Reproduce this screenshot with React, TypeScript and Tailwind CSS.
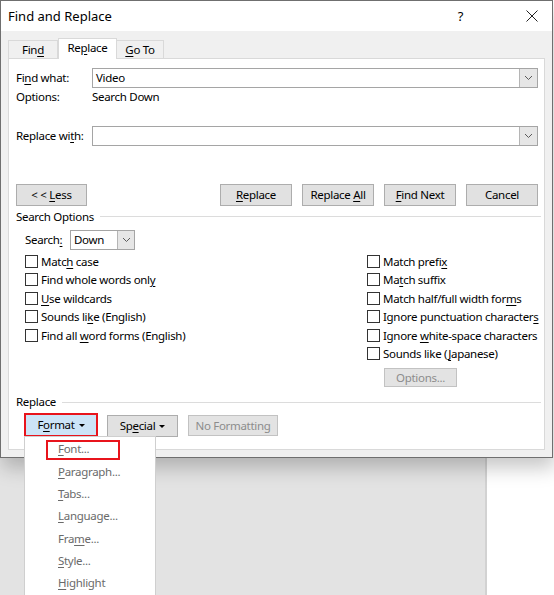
import React from 'react';

const U = ({ children }: { children: React.ReactNode }) => <span className="underline underline-offset-[2px]">{children}</span>;

const Chevron = () => (
  <svg width="9" height="6" viewBox="0 0 9 6" fill="none">
    <path d="M1 1l3.5 3.5L8 1" stroke="#5a5a5a" strokeWidth="1" />
  </svg>
);

const Caret = () => (
  <svg width="6" height="3" viewBox="0 0 6 3" className="ml-[4px]">
    <path d="M0 0h6L3 3z" fill="#000" />
  </svg>
);

const Btn = ({ children, className = '' }: { children: React.ReactNode; className?: string }) => (
  <div className={`h-[22px] flex items-center justify-center bg-[#e1e1e1] border border-[#adadad] whitespace-pre ${className}`}>
    <span className="flex items-center whitespace-pre">{children}</span>
  </div>
);

const Check = ({ children }: { children: React.ReactNode }) => (
  <div className="h-[18.5px] flex items-center whitespace-nowrap">
    <div className="shrink-0 w-[13px] h-[13px] border border-[#333333] bg-white" />
    <span className="ml-[3px]">{children}</span>
  </div>
);

export default function App() {
  return (
    <div className="relative w-[554px] h-[595px] overflow-hidden bg-white text-[11.5px] tracking-[-0.3px] text-black font-['Noto_Sans','Liberation_Sans',sans-serif] leading-none">
      {/* dialog window */}
      <div className="relative z-10 w-[553px] h-[458px] border border-[#6f6f6f] bg-[#f0f0f0] flex flex-col shadow-[2px_10px_18px_rgba(0,0,0,0.22)]">
        {/* title bar */}
        <div className="h-[30px] bg-white flex items-center pl-[7px] pr-[14px]">
          <span className="text-[13px] tracking-normal">Find and Replace</span>
          <span className="ml-auto text-[13px] mr-[63px]">?</span>
          <svg width="12" height="12" viewBox="0 0 12 12">
            <path d="M0.5 0.5l11 11M11.5 0.5l-11 11" stroke="#222" strokeWidth="1" />
          </svg>
        </div>

        {/* tabs */}
        <div className="h-[27px] flex items-end pl-[7px]">
          <div className="w-[50px] h-[18px] border border-b-0 border-[#d9d9d9] flex items-center justify-center">
            <span>Fin<U>d</U></span>
          </div>
          <div className="relative z-10 -mb-px w-[59px] h-[21px] bg-white border border-b-0 border-[#d9d9d9] flex items-center justify-center pb-[2px]">
            <span>Re<U>p</U>lace</span>
          </div>
          <div className="w-[47px] h-[18px] border border-b-0 border-l-0 border-[#d9d9d9] flex items-center justify-center">
            <span><U>G</U>o To</span>
          </div>
        </div>

        {/* panel */}
        <div className="relative ml-[7px] w-[537px] h-[392px] bg-white border border-[#d9d9d9] flex flex-col">
          <div className="mt-[9px] h-[20px] flex items-center pl-[7px]">
            <span className="w-[76px]">Fi<U>n</U>d what:</span>
            <div className="w-[446px] h-[20px] border border-[#a5a5a5] flex items-center">
              <span className="pl-[3px] flex-1">Video</span>
              <div className="w-[18px] h-[18px] bg-[#e6e6e6] border-l border-[#b5b5b5] flex items-center justify-center">
                <Chevron />
              </div>
            </div>
          </div>
          <div className="h-[18px] flex items-center pl-[7px]">
            <span className="w-[76px]">Options:</span>
            <span>Search Down</span>
          </div>

          <div className="mt-[20px] h-[20px] flex items-center pl-[7px]">
            <span className="w-[76px]">Replace wi<U>t</U>h:</span>
            <div className="w-[446px] h-[20px] border border-[#a5a5a5] flex items-center justify-end">
              <div className="w-[18px] h-[18px] bg-[#e6e6e6] border-l border-[#b5b5b5] flex items-center justify-center">
                <Chevron />
              </div>
            </div>
          </div>

          <div className="mt-[38px] flex items-center pl-[7px] pr-[6px]">
            <Btn className="w-[71px]">&lt; &lt; <U>L</U>ess</Btn>
            <div className="ml-auto flex gap-[10px]">
              <Btn className="w-[72px]"><U>R</U>eplace</Btn>
              <Btn className="w-[72px]">Replace <U>A</U>ll</Btn>
              <Btn className="w-[72px]"><U>F</U>ind Next</Btn>
              <Btn className="w-[72px]">Cancel</Btn>
            </div>
          </div>

          <div className="h-[21px] flex items-center pl-[7px] pr-[3px]">
            <span>Search Options</span>
            <div className="flex-1 ml-[6px] h-px bg-[#dcdcdc]" />
          </div>

          <div className="mt-[3px] h-[20px] flex items-center pl-[16px]">
            <span className="w-[45px]">Search<U>:</U></span>
            <div className="w-[65px] h-[20px] border border-[#a5a5a5] flex items-center">
              <span className="pl-[3px] flex-1">Down</span>
              <div className="w-[17px] h-[18px] bg-[#e6e6e6] border-l border-[#b5b5b5] flex items-center justify-center">
                <Chevron />
              </div>
            </div>
          </div>

          <div className="mt-[2px] flex pl-[16px]">
            <div className="shrink-0 w-[342px] flex flex-col">
              <Check>Matc<U>h</U> case</Check>
              <Check>Find whole words onl<U>y</U></Check>
              <Check><U>U</U>se wildcards</Check>
              <Check>Sounds li<U>k</U>e (English)</Check>
              <Check>Find all <U>w</U>ord forms (English)</Check>
            </div>
            <div className="shrink-0 flex flex-col">
              <Check>Match prefi<U>x</U></Check>
              <Check>Ma<U>t</U>ch suffix</Check>
              <Check>Match half/full width for<U>m</U>s</Check>
              <Check>Ignore punctuation character<U>s</U></Check>
              <Check>Ignore <U>w</U>hite-space characters</Check>
              <Check>Sounds like (<U>J</U>apanese)</Check>
              <div className="mt-[5px] ml-[17px] w-[73px] h-[19px] bg-[#e3e3e3] border border-[#c2c2c2] flex items-center justify-center text-[#8c8c8c]">
                Options...
              </div>
            </div>
          </div>

          <div className="mt-[5px] h-[20px] flex items-center pl-[7px] pr-[3px]">
            <span>Replace</span>
            <div className="flex-1 ml-[6px] h-px bg-[#dcdcdc]" />
          </div>

          <div className="mt-[1px] flex items-end pl-[15px]">
            <div className="w-[74px] h-[24px] bg-[#cce4f7] border-2 border-[#e8141c] flex items-center justify-center">
              <span className="flex items-center">F<U>o</U>rmat<Caret /></span>
            </div>
            <Btn className="ml-[9px] w-[71px] h-[21px]">Sp<U>e</U>cial<Caret /></Btn>
            <div className="ml-[10px] mb-px w-[90px] h-[21px] bg-[#e3e3e3] border border-[#c2c2c2] flex items-center justify-center text-[#8c8c8c]">
              No Formatting
            </div>
          </div>
        </div>
      </div>

      {/* area below dialog */}
      <div className="flex h-[137px]">
        <div className="w-[487px] bg-[#e3e3e3] border-r-2 border-[#d2d2d2]" />
      </div>

      {/* format dropdown menu */}
      <div className="absolute z-20 left-[24px] top-[436px] w-[132px] h-[170px] bg-white border border-[#cfcfcf] pt-[1px] text-[#6a6a6a]">
        {[
          <><U>F</U>ont...</>,
          <><U>P</U>aragraph...</>,
          <><U>T</U>abs...</>,
          <><U>L</U>anguage...</>,
          <>Fra<U>m</U>e...</>,
          <><U>S</U>tyle...</>,
          <><U>H</U>ighlight</>,
        ].map((label, i) => (
          <div key={i} className="h-[22.3px] flex items-center pl-[33px]">
            <span>{label}</span>
          </div>
        ))}
        <div className="absolute left-[21px] top-[3px] w-[74px] h-[20px] border-2 border-[#e8141c]" />
      </div>
    </div>
  );
}
